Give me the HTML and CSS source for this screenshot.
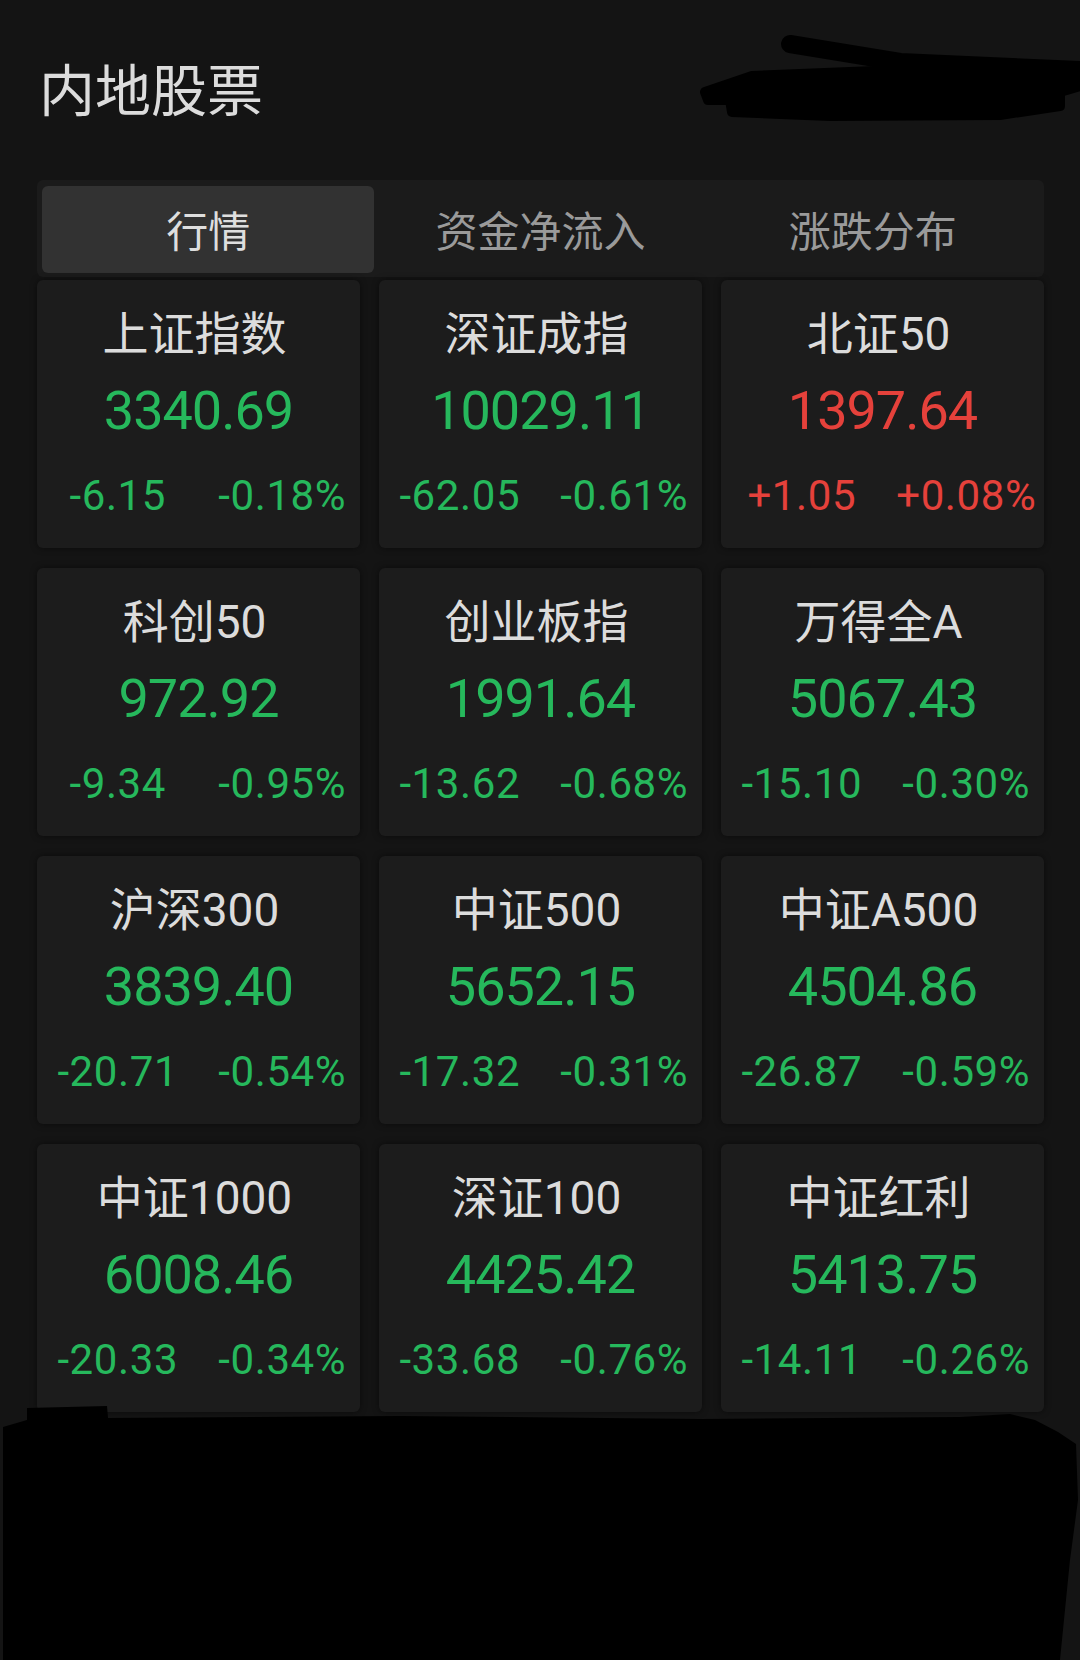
FILE: index.html
```html
<!DOCTYPE html>
<html lang="zh-CN">
<head>
<meta charset="utf-8">
<title>内地股票</title>
<link rel="stylesheet" href="styles.css">
</head>
<body>
<div class="page">
  <h1 class="title">内地股票</h1>
  <div class="tabs">
    <div class="tab active">行情</div>
    <div class="tab">资金净流入</div>
    <div class="tab">涨跌分布</div>
  </div>
  <div class="grid">
    <div class="card"><div class="name">上证指数</div><div class="value down">3340.69</div><div class="chg down"><span>-6.15</span><span>-0.18%</span></div></div>
    <div class="card"><div class="name">深证成指</div><div class="value down">10029.11</div><div class="chg down"><span>-62.05</span><span>-0.61%</span></div></div>
    <div class="card"><div class="name">北证50</div><div class="value up">1397.64</div><div class="chg up"><span>+1.05</span><span>+0.08%</span></div></div>
    <div class="card"><div class="name">科创50</div><div class="value down">972.92</div><div class="chg down"><span>-9.34</span><span>-0.95%</span></div></div>
    <div class="card"><div class="name">创业板指</div><div class="value down">1991.64</div><div class="chg down"><span>-13.62</span><span>-0.68%</span></div></div>
    <div class="card"><div class="name">万得全A</div><div class="value down">5067.43</div><div class="chg down"><span>-15.10</span><span>-0.30%</span></div></div>
    <div class="card"><div class="name">沪深300</div><div class="value down">3839.40</div><div class="chg down"><span>-20.71</span><span>-0.54%</span></div></div>
    <div class="card"><div class="name">中证500</div><div class="value down">5652.15</div><div class="chg down"><span>-17.32</span><span>-0.31%</span></div></div>
    <div class="card"><div class="name">中证A500</div><div class="value down">4504.86</div><div class="chg down"><span>-26.87</span><span>-0.59%</span></div></div>
    <div class="card"><div class="name">中证1000</div><div class="value down">6008.46</div><div class="chg down"><span>-20.33</span><span>-0.34%</span></div></div>
    <div class="card"><div class="name">深证100</div><div class="value down">4425.42</div><div class="chg down"><span>-33.68</span><span>-0.76%</span></div></div>
    <div class="card"><div class="name">中证红利</div><div class="value down">5413.75</div><div class="chg down"><span>-14.11</span><span>-0.26%</span></div></div>
  </div>
  <svg class="redact" width="1080" height="1660" viewBox="0 0 1080 1660" aria-hidden="true">
    <path d="M790 44 L900 62 L1080 70" fill="none" stroke="#000" stroke-width="18" stroke-linecap="round" stroke-linejoin="round"/>
    <path d="M705 92 L752 76 L900 70 L1080 74 L1080 86 L1060 92 L1060 106 L1000 115 L830 116 L732 112 L730 100 L708 100 Z" fill="#000" stroke="#000" stroke-width="10" stroke-linejoin="round"/>
    <path d="M3 1427 L27 1420 L27 1408 L107 1406 L108 1418 L400 1416 L700 1419 L960 1417 L1010 1414 L1035 1420 L1058 1432 L1076 1444 L1078 1500 L1070 1560 L1064 1620 L1060 1660 L3 1660 Z" fill="#000"/>
  </svg>
</div>
</body>
</html>
```
FILE: styles.css
```css
html, body {
  margin: 0;
  padding: 0;
  background: #141414;
}
.page {
  position: relative;
  width: 1080px;
  height: 1660px;
  box-sizing: border-box;
  padding: 0 36px 0 37px;
  overflow: hidden;
  background: #141414;
  font-family: Roboto, "Noto Sans CJK SC", sans-serif;
}
.title {
  margin: 59px 0 0 2px;
  font-family: "Noto Sans CJK SC", sans-serif;
  font-size: 56px;
  line-height: 56px;
  font-weight: 400;
  color: #dcdcdc;
}
.tabs {
  margin-top: 65px;
  height: 97px;
  box-sizing: border-box;
  padding: 6px 5px 4px;
  display: grid;
  grid-template-columns: repeat(3, 1fr);
  background: #1b1b1b;
  border-radius: 6px;
}
.tab {
  display: flex;
  align-items: center;
  justify-content: center;
  padding-bottom: 3px;
  font-family: "Noto Sans CJK SC", sans-serif;
  font-size: 42px;
  color: #9a9a9a;
  border-radius: 6px;
}
.tab.active {
  background: #323232;
  color: #dedede;
}
.grid {
  margin-top: 3px;
  display: grid;
  grid-template-columns: repeat(3, 1fr);
  grid-auto-rows: 268px;
  column-gap: 19px;
  row-gap: 20px;
}
.card {
  background: #1c1c1c;
  border-radius: 6px;
  box-shadow: 0 0 6px rgba(0,0,0,0.5);
  display: flex;
  flex-direction: column;
  align-items: stretch;
  padding-top: 24px;
  box-sizing: border-box;
}
.name {
  height: 60px;
  line-height: 60px;
  text-align: center;
  font-size: 46px;
  color: #dcdcdc;
  margin-left: -8px;
}
.value {
  margin-top: 12px;
  height: 70px;
  line-height: 70px;
  text-align: center;
  font-size: 54px;
  letter-spacing: -1px;
}
.chg {
  margin-top: 25px;
  height: 50px;
  line-height: 50px;
  display: grid;
  grid-template-columns: 1fr 1fr;
  font-size: 42px;
  letter-spacing: 0.6px;
  text-align: center;
}
.chg span:last-child {
  padding-left: 6px;
}
.down { color: #26b85c; }
.up { color: #e5413b; }
.redact {
  position: absolute;
  left: 0;
  top: 0;
  pointer-events: none;
}
```
